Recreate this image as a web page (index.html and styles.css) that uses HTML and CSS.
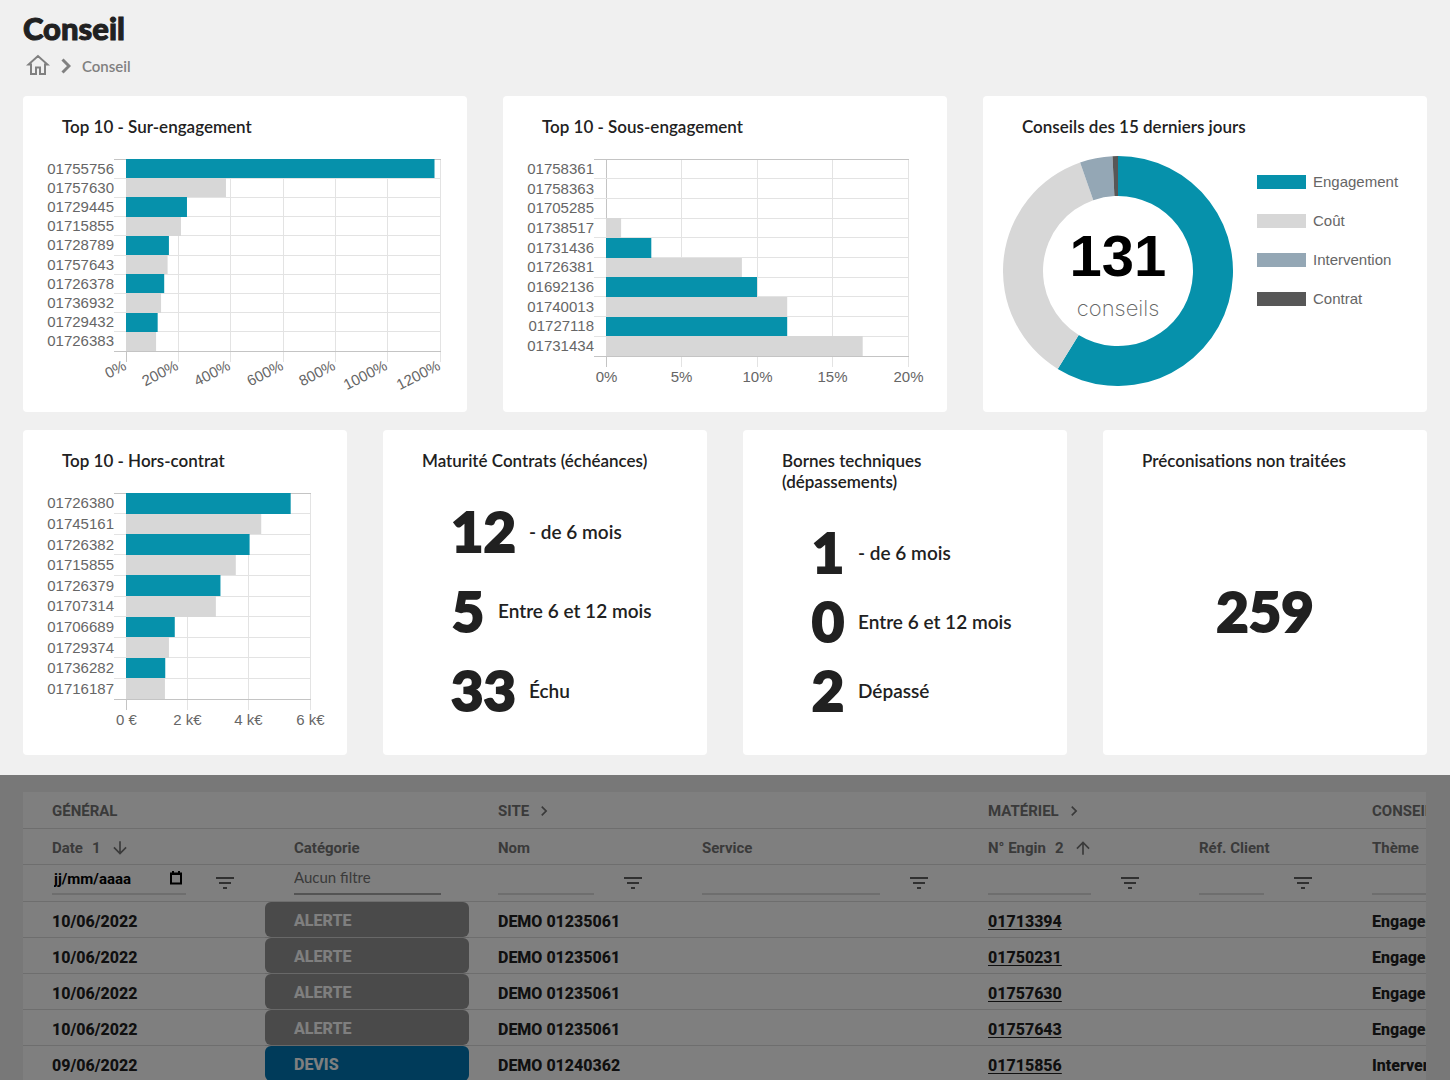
FILE: index.html
```html
<!DOCTYPE html>
<html lang="fr">
<head>
  <meta charset="utf-8">
  <meta name="viewport" content="width=device-width, initial-scale=1">
  <title>Conseil</title>
  <link rel="stylesheet" href="styles.css">
</head>
<body>
  <svg class="sprite" aria-hidden="true">
    <symbol id="icon-filter" viewBox="0 0 24 24"><path d="M10 18h4v-2h-4v2zM3 6v2h18V6H3zm3 7h12v-2H6v2z"/></symbol>
    <symbol id="icon-chevron" viewBox="0 0 24 24"><path d="M10 6 8.590 7.410 13.170 12l-4.580 4.590L10 18l6-6z"/></symbol>
    <symbol id="icon-down" viewBox="0 0 24 24"><path d="m20 12-1.410-1.410L13 16.170V4h-2v12.170l-5.580-5.590L4 12l8 8 8-8z"/></symbol>
    <symbol id="icon-up" viewBox="0 0 24 24"><path d="m4 12 1.410 1.410L11 7.830V20h2V7.830l5.580 5.590L20 12l-8-8-8 8z"/></symbol>
  </svg>

  <main class="dashboard">
    <header class="page-head">
      <h1>Conseil</h1>
      <nav class="breadcrumb" aria-label="Fil d'Ariane">
        <a href="#" aria-label="Accueil"><svg class="home" viewBox="0 0 24 22"><path d="M12 2 2.500 10.500H5V20h5v-6.500h4V20h5v-9.500h2.500z"/></svg></a>
        <svg class="sep" viewBox="0 0 10 16"><path d="m1.500 1.500 6.500 6.500-6.500 6.500"/></svg>
        <span>Conseil</span>
      </nav>
    </header>

    <section class="cards cards-3">
      <article class="card">
        <h2>Top 10 - Sur-engagement</h2>
        <svg class="chart" id="chart-sur" role="img" aria-label="Top 10 - Sur-engagement"></svg>
      </article>
      <article class="card">
        <h2>Top 10 - Sous-engagement</h2>
        <svg class="chart" id="chart-sous" role="img" aria-label="Top 10 - Sous-engagement"></svg>
      </article>
      <article class="card">
        <h2>Conseils des 15 derniers jours</h2>
        <div class="donut-row">
          <svg class="donut" id="donut" viewBox="0 0 230 230" role="img" aria-label="131 conseils"></svg>
          <ul class="legend">
            <li><span class="swatch teal"></span>Engagement</li>
            <li><span class="swatch grey"></span>Coût</li>
            <li><span class="swatch blue"></span>Intervention</li>
            <li><span class="swatch dark"></span>Contrat</li>
          </ul>
        </div>
      </article>
    </section>

    <section class="cards cards-4">
      <article class="card">
        <h2>Top 10 - Hors-contrat</h2>
        <svg class="chart" id="chart-hors" role="img" aria-label="Top 10 - Hors-contrat"></svg>
      </article>
      <article class="card">
        <h2>Maturité Contrats (échéances)</h2>
        <ul class="kpis">
          <li><strong>12</strong><span>- de 6 mois</span></li>
          <li><strong>5</strong><span>Entre 6 et 12 mois</span></li>
          <li><strong>33</strong><span>Échu</span></li>
        </ul>
      </article>
      <article class="card">
        <h2>Bornes techniques<br>(dépassements)</h2>
        <ul class="kpis">
          <li><strong>1</strong><span>- de 6 mois</span></li>
          <li><strong>0</strong><span>Entre 6 et 12 mois</span></li>
          <li><strong>2</strong><span>Dépassé</span></li>
        </ul>
      </article>
      <article class="card">
        <h2>Préconisations non traitées</h2>
        <p class="total"><strong>259</strong></p>
      </article>
    </section>
  </main>

  <section class="grid-area">
    <div class="grid-scroll">
      <table class="grid">
        <colgroup>
          <col class="c-date"><col class="c-cat"><col class="c-nom"><col class="c-service"><col class="c-engin"><col class="c-ref"><col class="c-theme">
        </colgroup>
        <thead>
          <tr class="groups">
            <th colspan="2">GÉNÉRAL</th>
            <th colspan="2"><span class="head">SITE<svg class="more"><use href="#icon-chevron"/></svg></span></th>
            <th colspan="2"><span class="head">MATÉRIEL<svg class="more"><use href="#icon-chevron"/></svg></span></th>
            <th>CONSEIL</th>
          </tr>
          <tr class="names">
            <th><span class="head sorted">Date<span>1</span><svg><use href="#icon-down"/></svg></span></th>
            <th>Catégorie</th>
            <th>Nom</th>
            <th>Service</th>
            <th><span class="head sorted">N° Engin<span>2</span><svg><use href="#icon-up"/></svg></span></th>
            <th>Réf. Client</th>
            <th>Thème</th>
          </tr>
          <tr class="filters">
            <td><div class="filter">
              <span class="date-field"><input type="text" value="jj/mm/aaaa" aria-label="Filtrer par date"><button type="button" aria-label="Calendrier"><svg viewBox="0 0 12 14"><path d="M1 2.500h10v10H1zM1 3h10M3 0v2M9 0v2"/></svg></button></span>
              <button type="button" aria-label="Filtre date"><svg><use href="#icon-filter"/></svg></button></div></td>
            <td><div class="filter"><select aria-label="Filtrer par catégorie"><option>Aucun filtre</option></select></div></td>
            <td><div class="filter"><input type="text" aria-label="Filtrer par nom"><button type="button" aria-label="Filtre nom"><svg><use href="#icon-filter"/></svg></button></div></td>
            <td><div class="filter"><input type="text" aria-label="Filtrer par service"><button type="button" aria-label="Filtre service"><svg><use href="#icon-filter"/></svg></button></div></td>
            <td><div class="filter"><input type="text" aria-label="Filtrer par engin"><button type="button" aria-label="Filtre engin"><svg><use href="#icon-filter"/></svg></button></div></td>
            <td><div class="filter"><input type="text" aria-label="Filtrer par référence"><button type="button" aria-label="Filtre référence"><svg><use href="#icon-filter"/></svg></button></div></td>
            <td><div class="filter"><input type="text" aria-label="Filtrer par thème"></div></td>
          </tr>
        </thead>
        <tbody>
          <tr><td>10/06/2022</td><td class="tag"><span>ALERTE</span></td><td>DEMO 01235061</td><td></td><td><a href="#">01713394</a></td><td></td><td>Engagement</td></tr>
          <tr><td>10/06/2022</td><td class="tag"><span>ALERTE</span></td><td>DEMO 01235061</td><td></td><td><a href="#">01750231</a></td><td></td><td>Engagement</td></tr>
          <tr><td>10/06/2022</td><td class="tag"><span>ALERTE</span></td><td>DEMO 01235061</td><td></td><td><a href="#">01757630</a></td><td></td><td>Engagement</td></tr>
          <tr><td>10/06/2022</td><td class="tag"><span>ALERTE</span></td><td>DEMO 01235061</td><td></td><td><a href="#">01757643</a></td><td></td><td>Engagement</td></tr>
          <tr><td>09/06/2022</td><td class="tag devis"><span>DEVIS</span></td><td>DEMO 01240362</td><td></td><td><a href="#">01715856</a></td><td></td><td>Intervention</td></tr>
        </tbody>
      </table>
    </div>
  </section>
  <script src="charts.js"></script>
</body>
</html>
```
FILE: styles.css
```css
:root {
  --teal: #0691ab;
  --grey: #d7d7d7;
  --blue: #94a7b5;
  --dark: #575757;
  --ink: #212121;
  --geometric: Lato, "Open Sans", sans-serif;
  --heavy: "Lato Black", Lato, "Open Sans", sans-serif;
  --chart: "Liberation Sans", Arial, sans-serif;
}

* { box-sizing: border-box; }

body {
  margin: 0;
  height: 100vh;
  display: flex;
  flex-direction: column;
  overflow: hidden;
  background: #f0f0f0;
  color: var(--ink);
  font-family: var(--geometric);
}

h1, h2, p, ul { margin: 0; padding: 0; }
ul { list-style: none; }
button, input, select { border: 0; padding: 0; background: none; color: inherit; font: inherit; }

.sprite { display: none; }

.dashboard {
  flex: none;
  display: flex;
  flex-direction: column;
  gap: 18px;
  padding: 10px 23px 20px;
}

.page-head { height: 68px; }
h1 { font: 900 31px/36px var(--heavy); -webkit-text-stroke: 1px currentColor; }

.breadcrumb {
  display: flex;
  align-items: center;
  gap: 11px;
  height: 38px;
  padding: 2px 0 0 3px;
  color: #808080;
  font-size: 15px;
  font-weight: 600;
}
.breadcrumb a { display: flex; color: inherit; }
.breadcrumb svg { fill: none; stroke: currentColor; stroke-width: 2; }
.breadcrumb .home { width: 24px; height: 22px; margin-bottom: 2px; }
.breadcrumb .sep { width: 10px; height: 16px; stroke-width: 3; }

.cards { display: grid; gap: 36px; }
.cards-3 { grid-template-columns: repeat(3, 1fr); }
.cards-4 { grid-template-columns: repeat(4, 1fr); }

.card {
  display: flex;
  flex-direction: column;
  min-width: 0;
  background: #fff;
  border-radius: 4px;
}
.cards-3 .card { min-height: 316px; }
.cards-4 .card { min-height: 325px; }
h2 { padding: 20px 39px 0; font-size: 17px; line-height: 21px; font-weight: 600; }

.chart { display: block; width: 100%; margin-top: 13px; overflow: visible; font: 15px var(--chart); }
.chart text { fill: #666; }
.chart line { stroke: #e3e3e3; shape-rendering: crispEdges; }
.chart .axis { stroke: #c4c4c4; }
.fill-teal { fill: var(--teal); }
.fill-grey { fill: var(--grey); }
.fill-blue { fill: var(--blue); }
.fill-dark { fill: var(--dark); }

.donut-row { display: flex; gap: 24px; padding: 19px 20px 0 20px; }
.donut { flex: none; width: 230px; height: 230px; font-family: var(--chart); }
.donut .count { font-size: 58px; font-weight: 700; fill: #000; }
.donut .unit { font: 200 22px Inter, sans-serif; fill: #666; }
.legend {
  display: flex;
  flex-direction: column;
  gap: 19px;
  padding-top: 16px;
  color: #666;
  font: 15px/20px var(--chart);
}
.legend li { display: flex; align-items: center; gap: 7px; }
.swatch { width: 49px; height: 14px; }
.swatch.teal { background: var(--teal); }
.swatch.grey { background: var(--grey); }
.swatch.blue { background: var(--blue); }
.swatch.dark { background: var(--dark); }

.kpis {
  flex: 1;
  display: flex;
  flex-direction: column;
  justify-content: space-between;
  padding: 30px 20px 35px 68px;
}
.kpis li { display: flex; align-items: center; gap: 13px; height: 60px; font-size: 19px; font-weight: 600; }
.kpis strong, .total strong { font: 900 56px/60px var(--heavy); -webkit-text-stroke: 2px currentColor; }
.kpis strong { min-width: 34px; text-align: center; }
.total { flex: 1; display: grid; place-items: center; padding: 30px 0 35px; }

/* Table, dimmed while it is inactive */
.grid-area {
  position: relative;
  flex: 1;
  min-height: 0;
  padding: 17px 24px 0 23px;
  overflow: hidden;
  font-family: Roboto, sans-serif;
}
.grid-area::after {
  content: "";
  position: absolute;
  inset: 0;
  background: rgba(0, 0, 0, 0.5);
  pointer-events: none;
}
.grid-scroll { height: 100%; overflow: hidden; background: #fff; }
.grid { width: 1524px; table-layout: fixed; border-collapse: separate; border-spacing: 0; }
.c-date { width: 242px; }
.c-cat, .c-nom, .c-theme { width: 204px; }
.c-service { width: 286px; }
.c-engin { width: 211px; }
.c-ref { width: 173px; }

.grid th, .grid td {
  height: 36px;
  padding: 0 28px 0 29px;
  border-bottom: 1px solid #dcdcdc;
  text-align: left;
  white-space: nowrap;
}
.grid th { padding-top: 2px; color: #757575; font-size: 15px; font-weight: 700; }
.grid .groups th, .grid .filters td { height: 37px; }
.grid tbody td { padding-top: 4px; font-size: 16px; font-weight: 800; color: #212121; }
.grid a { color: inherit; text-underline-offset: 2px; }

.head { display: flex; align-items: center; gap: 5px; }
.head svg { width: 20px; height: 20px; fill: currentColor; }
.head.sorted { gap: 9px; }

.filter { display: flex; align-items: flex-start; gap: 27px; height: 36px; }
.filter input, .filter select { flex: 1; min-width: 0; width: 0; height: 30px; border-bottom: 2px solid #dcdcdc; }
.filter > button { display: flex; align-items: center; height: 36px; }
.filter > button svg { width: 24px; height: 24px; fill: #616161; }
.filter select {
  appearance: none;
  padding-bottom: 4px;
  border-bottom-color: #a8a8a8;
  color: #757575;
  font: 15px var(--geometric);
}
.date-field { flex: 1; min-width: 0; display: flex; height: 30px; border-bottom: 2px solid #dcdcdc; font-size: 15px; font-weight: 700; color: #000; }
.date-field input { height: 28px; border: 0; padding-left: 2px; }
.date-field button { display: flex; align-items: center; padding: 0 4px 3px 0; }
.date-field svg { width: 12px; height: 14px; fill: none; stroke: #000; stroke-width: 2; }

.tag { position: relative; }
.grid tbody .tag { padding: 0; border-bottom-color: #d0d0d0; }
.tag span {
  display: flex;
  align-items: center;
  height: 35px;
  padding: 2px 29px 0;
  border-radius: 6px;
  background: #949494;
  color: #fff;
}
.tag.devis span { background: #0077b5; }
```
FILE: charts.js
```js
const NS = "http://www.w3.org/2000/svg";

function add(parent, name, attrs, text) {
  const el = document.createElementNS(NS, name);
  for (const key in attrs) el.setAttribute(key, attrs[key]);
  if (text !== undefined) el.textContent = text;
  parent.appendChild(el);
  return el;
}

function barChart(id, opt) {
  const svg = document.getElementById(id);
  const left = 103, top = 9;
  const { width, right, bottom, max, ticks, rows, slanted } = opt;
  const step = (bottom - top) / rows.length;
  svg.setAttribute("viewBox", `0 0 ${width} ${bottom + 36}`);

  // Half a unit keeps one-pixel lines on the pixel grid
  const snap = v => Math.floor(v) + 0.5;

  ticks.forEach((label, i) => {
    const x = snap(left + (right - left) * i / (ticks.length - 1));
    add(svg, "line", { x1: x, x2: x, y1: top, y2: bottom + 11, class: i ? "" : "axis" });
    const place = slanted
      ? { "text-anchor": "end", transform: `translate(${x + 1} ${bottom + 18}) rotate(-27)` }
      : { "text-anchor": "middle", x, y: bottom + 26 };
    add(svg, "text", place, label);
  });
  for (let i = 0; i <= rows.length; i++) {
    const y = snap(top + step * i);
    const edge = i === 0 || i === rows.length;
    add(svg, "line", { x1: left - 12, x2: right + 1, y1: y, y2: y, class: edge ? "axis" : "" });
  }
  rows.forEach(([name, value], i) => {
    const y = Math.round(top + step * i);
    const next = Math.round(top + step * (i + 1));
    add(svg, "rect", { x: left, y, width: (right - left) * value / max, height: next - y, class: i % 2 ? "fill-grey" : "fill-teal" });
    add(svg, "text", { x: left - 12, y: top + step * (i + 0.5) + 5, "text-anchor": "end" }, name);
  });
}

barChart("chart-sur", {
  width: 444, right: 417, bottom: 201, max: 1200, slanted: true,
  ticks: ["0%", "200%", "400%", "600%", "800%", "1000%", "1200%"],
  rows: [["01755756", 1179], ["01757630", 382], ["01729445", 233], ["01715855", 210], ["01728789", 164],
    ["01757643", 159], ["01726378", 146], ["01736932", 134], ["01729432", 121], ["01726383", 115]]
});

barChart("chart-sous", {
  width: 444, right: 405, bottom: 206, max: 20,
  ticks: ["0%", "5%", "10%", "15%", "20%"],
  rows: [["01758361", 0], ["01758363", 0], ["01705285", 0], ["01738517", 1], ["01731436", 3],
    ["01726381", 9], ["01692136", 10], ["01740013", 12], ["01727118", 12], ["01731434", 17]]
});

barChart("chart-hors", {
  width: 324, right: 287, bottom: 215, max: 6000,
  ticks: ["0 €", "2 k€", "4 k€", "6 k€"],
  rows: [["01726380", 5370], ["01745161", 4410], ["01726382", 4030], ["01715855", 3580], ["01726379", 3080],
    ["01707314", 2930], ["01706689", 1590], ["01729374", 1400], ["01736282", 1280], ["01716187", 1270]]
});

const donut = document.getElementById("donut");
const slices = [["teal", 77], ["grey", 47], ["blue", 6], ["dark", 1]];
const total = slices.reduce((sum, s) => sum + s[1], 0);
const point = (share, r) => {
  const a = share * 2 * Math.PI;
  return `${115 + r * Math.sin(a)} ${115 - r * Math.cos(a)}`;
};
let start = 0;
for (const [tone, count] of slices) {
  const end = start + count / total;
  const large = end - start > 0.5 ? 1 : 0;
  add(donut, "path", {
    class: "fill-" + tone,
    d: `M${point(start, 115)}A115 115 0 ${large} 1 ${point(end, 115)}L${point(end, 75)}A75 75 0 ${large} 0 ${point(start, 75)}z`
  });
  start = end;
}
add(donut, "text", { class: "count", x: 115, y: 120, "text-anchor": "middle" }, total);
add(donut, "text", { class: "unit", x: 115, y: 160, "text-anchor": "middle" }, "conseils");
```
